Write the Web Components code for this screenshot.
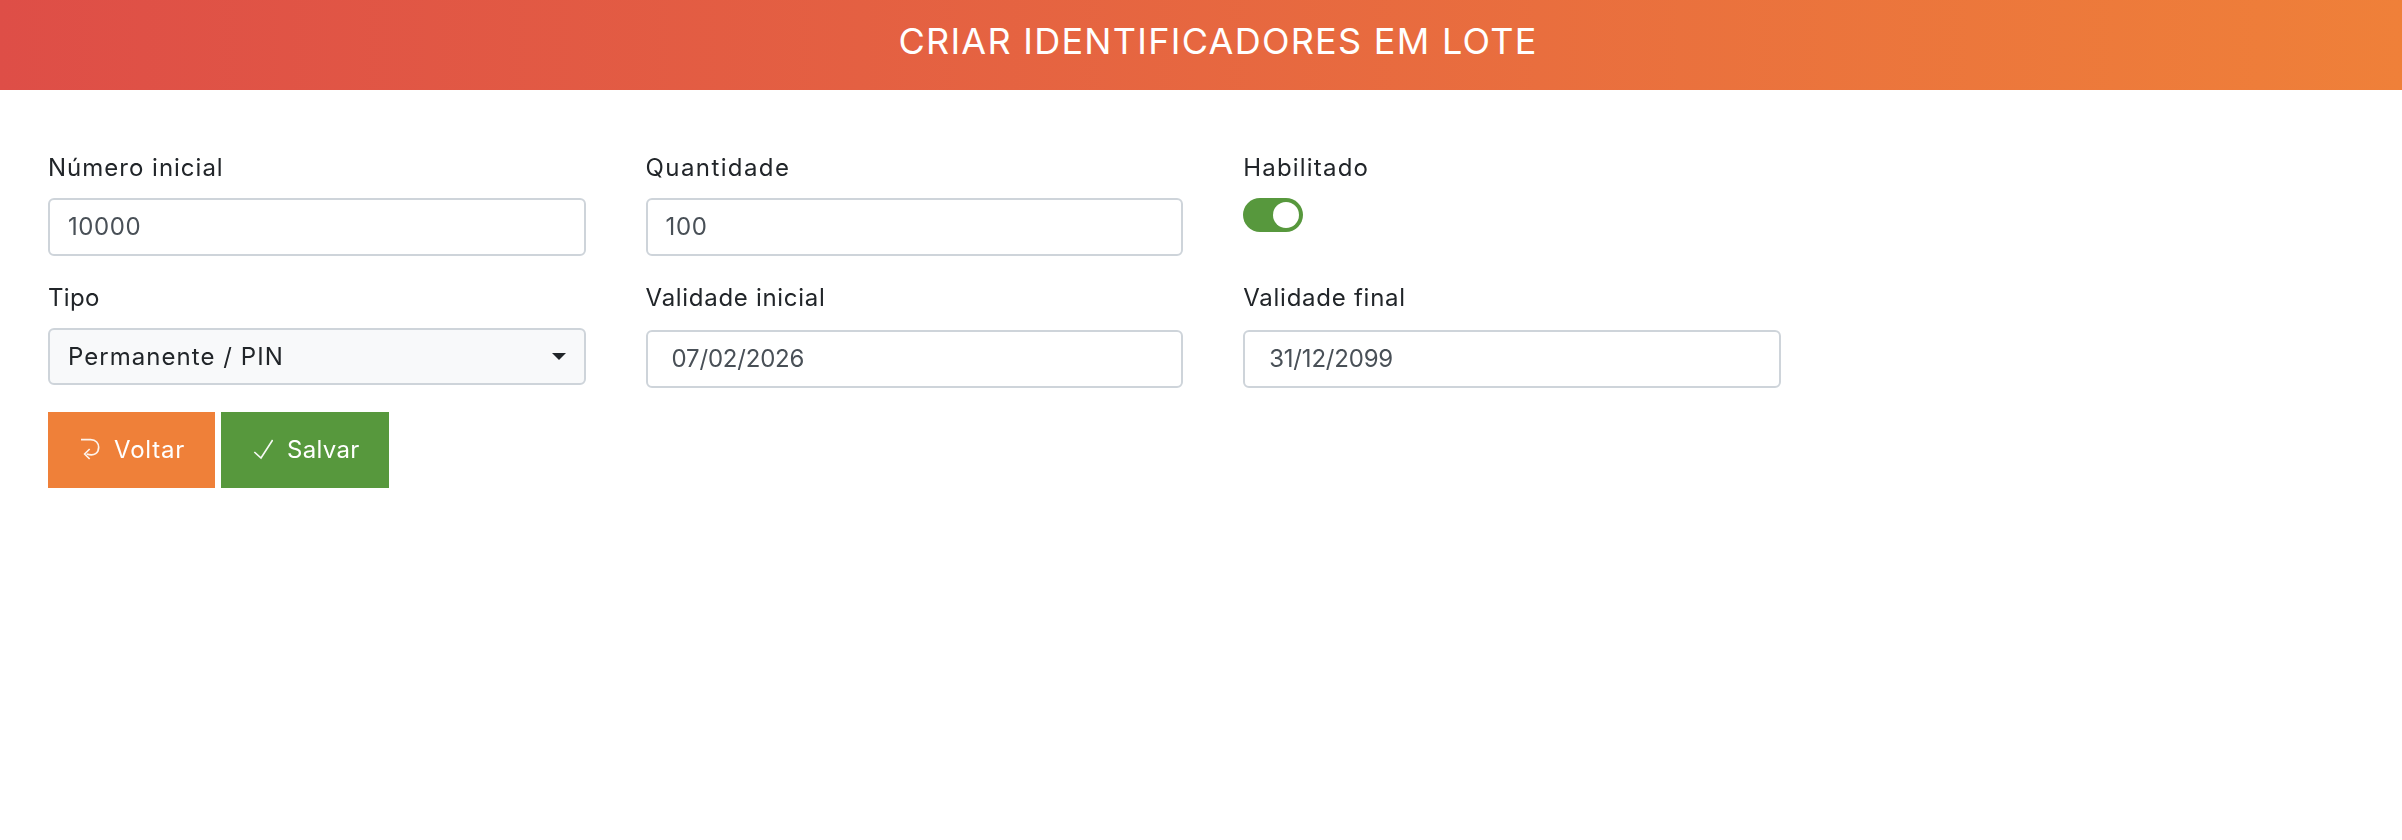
<!DOCTYPE html>
<html lang="pt-BR">
<head>
<meta charset="utf-8">
<title>Criar identificadores em lote</title>
<style>
  html, body { margin: 0; padding: 0; background: #fff; }
  body { font-family: Inter, "Open Sans", sans-serif; font-size: 24px; color: #212529; }
</style>
</head>
<body>
<page-header>CRIAR IDENTIFICADORES EM LOTE</page-header>
<batch-form>
  <form-field label="Número inicial" spacing="1"><text-box spacing="0.6">10000</text-box></form-field>
  <form-field label="Quantidade" spacing="1.4"><text-box spacing="0.6">100</text-box></form-field>
  <form-field label="Habilitado" spacing="1.2"><toggle-switch></toggle-switch></form-field>
  <form-field second label="Tipo" spacing="0.3"><select-box>Permanente / PIN</select-box></form-field>
  <form-field second label="Validade inicial" spacing="0.7"><text-box date spacing="-0.2">07/02/2026</text-box></form-field>
  <form-field second label="Validade final" spacing="0.75"><text-box date spacing="-0.2">31/12/2099</text-box></form-field>
  <action-button slot="actions" color="#ef8039" icon="back" width="167" spacing="0.8">Voltar</action-button>
  <action-button slot="actions" color="#57983d" icon="check" width="168" spacing="0.3">Salvar</action-button>
</batch-form>

<script>
class PageHeader extends HTMLElement {
  constructor() {
    super();
    this.attachShadow({mode: "open"}).innerHTML = `
      <style>
        :host {
          display: block;
          height: 90px;
          padding: 18px 0 0 34px;
          box-sizing: border-box;
          background: linear-gradient(90deg, #de4e47, #ef8039);
          color: #fff;
          font-size: 36px;
          line-height: 46px;
          letter-spacing: 1.27px;
          text-align: center;
        }
      </style>
      <slot></slot>`;
  }
}

class BatchForm extends HTMLElement {
  constructor() {
    super();
    this.attachShadow({mode: "open"}).innerHTML = `
      <style>
        :host { display: block; padding: 60px 48px 0; will-change: transform; }
        .grid {
          display: grid;
          grid-template-columns: repeat(3, 537.6px);
          column-gap: 60px;
          row-gap: 26px;
        }
        .actions { display: flex; gap: 6px; margin-top: 24px; }
      </style>
      <div class="grid"><slot></slot></div>
      <div class="actions"><slot name="actions"></slot></div>`;
  }
}

class FormField extends HTMLElement {
  constructor() {
    super();
    this.attachShadow({mode: "open"}).innerHTML = `
      <style>
        :host { display: block; height: 106px; }
        label {
          display: block;
          height: 36px;
          line-height: 36px;
          margin-bottom: 12px;
          letter-spacing: ${this.getAttribute("spacing")}px;
        }
        :host([second]) label { margin-top: -2px; margin-bottom: 14px; }
      </style>
      <label>${this.getAttribute("label")}</label>
      <slot></slot>`;
  }
}

class TextBox extends HTMLElement {
  constructor() {
    super();
    this.attachShadow({mode: "open"}).innerHTML = `
      <style>
        :host {
          display: block;
          height: 58px;
          box-sizing: border-box;
          border: 2px solid #ced4da;
          border-radius: 6px;
          padding: 0 18px;
          line-height: 54px;
          color: #495057;
          background: #fff;
          letter-spacing: ${this.getAttribute("spacing")}px;
        }
        :host([date]) { padding-left: 24px; }
      </style>
      <slot></slot>`;
  }
}

class SelectBox extends HTMLElement {
  constructor() {
    super();
    this.attachShadow({mode: "open"}).innerHTML = `
      <style>
        :host {
          display: flex;
          align-items: center;
          justify-content: space-between;
          height: 57px;
          margin-top: -2px;
          box-sizing: border-box;
          border: 2px solid #ced4da;
          border-radius: 6px;
          padding: 0 18px;
          color: #212529;
          background: #f8f9fa;
          letter-spacing: 1.05px;
        }
        .caret {
          width: 0;
          height: 0;
          border-left: 7px solid transparent;
          border-right: 7px solid transparent;
          border-top: 7px solid #212529;
        }
      </style>
      <slot></slot><span class="caret"></span>`;
  }
}

class ToggleSwitch extends HTMLElement {
  constructor() {
    super();
    this.attachShadow({mode: "open"}).innerHTML = `
      <style>
        :host {
          display: flex;
          align-items: center;
          justify-content: flex-end;
          width: 60px;
          height: 34px;
          box-sizing: border-box;
          padding-right: 4px;
          border-radius: 17px;
          background: #57983d;
        }
        span { width: 26px; height: 26px; border-radius: 50%; background: #fff; }
      </style>
      <span></span>`;
  }
}

const ICONS = {
  back: `<svg width="20" height="22" viewBox="30 22 60 66" fill="none" stroke="#fff" stroke-opacity=".9" stroke-width="5">
           <path d="M33 27H62C78 27 86 38 86 50C86 66 74 78 50 70"/>
           <path d="M59 55L44 70L59 85"/>
         </svg>`,
  check: `<svg width="20" height="22" viewBox="36 18 60 66" fill="none" stroke="#fff" stroke-opacity=".95" stroke-width="5">
            <path d="M40 60L60 78L95 24"/>
          </svg>`
};

class ActionButton extends HTMLElement {
  constructor() {
    super();
    this.attachShadow({mode: "open"}).innerHTML = `
      <style>
        :host {
          display: flex;
          align-items: center;
          gap: 14px;
          width: ${this.getAttribute("width")}px;
          height: 76px;
          box-sizing: border-box;
          padding: 0 0 2px 32px;
          color: #fff;
          letter-spacing: ${this.getAttribute("spacing")}px;
          background: ${this.getAttribute("color")};
        }
        svg { display: block; }
      </style>
      ${ICONS[this.getAttribute("icon")]}<span><slot></slot></span>`;
  }
}

customElements.define("page-header", PageHeader);
customElements.define("batch-form", BatchForm);
customElements.define("form-field", FormField);
customElements.define("text-box", TextBox);
customElements.define("select-box", SelectBox);
customElements.define("toggle-switch", ToggleSwitch);
customElements.define("action-button", ActionButton);
</script>
</body>
</html>
